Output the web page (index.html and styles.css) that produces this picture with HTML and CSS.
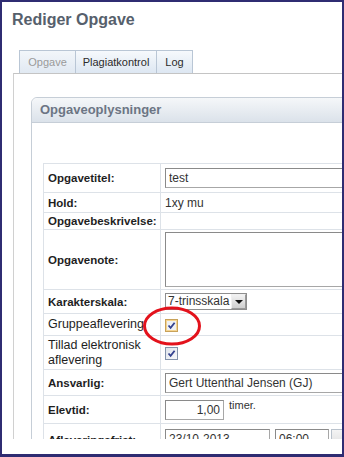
FILE: index.html
```html
<!DOCTYPE HTML>
<html>
<head>
<meta http-equiv="Content-Type" content="text/html; charset=utf-8">
<title>Rediger Opgave</title>
<link rel="stylesheet" href="styles.css">
</head>

<body>
<div class="frame">
<div class="viewport">

<h1>Rediger Opgave</h1>

<div class="tabs">
<span class="tab tabFirst current">Opgave</span>
<span class="tab tabPlag">Plagiatkontrol</span>
<span class="tab tabLog">Log</span>
</div>

<div class="panel">
<div class="box">
<div class="boxHead">Opgaveoplysninger</div>
<div class="boxBody">

<table class="form">
<colgroup><col class="colLabel"><col class="colValue"></colgroup>
<tr class="rowTitle">
	<th>Opgavetitel:</th>
	<td><input type="text" class="txt txtWide" value="test"></td>
</tr>
<tr class="rowHold">
	<th>Hold:</th>
	<td>1xy mu</td>
</tr>
<tr class="rowDesc">
	<th>Opgavebeskrivelse:</th>
	<td></td>
</tr>
<tr class="rowNote">
	<th>Opgavenote:</th>
	<td><textarea class="note"></textarea></td>
</tr>
<tr class="rowScale">
	<th>Karakterskala:</th>
	<td><span class="select"><span class="selectVal">7-trinsskala</span><span class="selectBtn"><span class="arrow"></span></span></span></td>
</tr>
<tr class="rowGroup">
	<th class="plain">Gruppeaflevering</th>
	<td><span class="chk chkHover"><svg width="9" height="9" viewBox="0 0 9 9"><path d="M1.5 4.5 L3.6 6.8 L7.6 1.8" fill="none" stroke="#33418f" stroke-width="1.8"/></svg></span></td>
</tr>
<tr class="rowElec">
	<th class="plain">Tillad elektronisk aflevering</th>
	<td><span class="chk"><svg width="9" height="9" viewBox="0 0 9 9"><path d="M1.5 4.5 L3.6 6.8 L7.6 1.8" fill="none" stroke="#33418f" stroke-width="1.8"/></svg></span></td>
</tr>
<tr class="rowResp">
	<th>Ansvarlig:</th>
	<td><input type="text" class="txt txtWide" value="Gert Uttenthal Jensen (GJ)"></td>
</tr>
<tr class="rowTime">
	<th>Elevtid:</th>
	<td><input type="text" class="txt txtNum" value="1,00"><span class="unit">timer.</span></td>
</tr>
<tr class="rowDeadline">
	<th>Afleveringsfrist:</th>
	<td><input type="text" class="txt txtDate" value="23/10-2013"><input type="text" class="txt txtClock" value="06:00"><span class="pickBtn"></span></td>
</tr>
</table>

</div>
</div>
</div>

<svg class="mark" width="60" height="42" viewBox="0 0 60 42"><ellipse cx="30" cy="21" rx="27.5" ry="18" fill="none" stroke="#e3121c" stroke-width="3"/></svg>

</div>
</div>
</body>
</html>
```

FILE: styles.css
```css
@charset "utf-8";

body{
	margin:0;
	background-color:white;
	font-family:"Liberation Sans", Arial, sans-serif;
	color:#222;
}

.frame{
	width:344px;
	height:457px;
	box-sizing:border-box;
	border:2px solid #2f2c72;
	border-bottom-width:3px;
	padding-bottom:15px;
	background-color:white;
}

.viewport{
	position:relative;
	height:100%;
	overflow:hidden;
}

h1{
	margin:9px 0 0 10px;
	font-size:16px;
	line-height:18px;
	color:#56606c;
}

/* tabs */
.tabs{
	display:flex;
	margin:21px 0 0 17px;
}

.tab{
	height:22px;
	line-height:22px;
	text-align:center;
	font-size:11px;
	color:#2b2b2b;
	border:1px solid #b9c6d5;
	border-bottom:none;
	border-right:none;
	background:linear-gradient(#f6f9fc, #dde7f2);
}

.tabFirst{
	width:55px;
}

.tabPlag{
	width:80px;
}

.tabLog{
	width:35px;
	border-right:1px solid #b9c6d5;
}

.current{
	color:#9a9a9a;
	background:linear-gradient(#f2f6fa, #e1e9f2);
}

.panel{
	margin-left:11px;
	border-top:1px solid #c4c4c4;
	border-left:1px solid #d0d0d0;
	padding:23px 0 0 17px;
	width:600px;
}

/* box */
.box{
	border:1px solid #c6ced7;
	border-top-left-radius:6px;
}

.boxHead{
	height:24px;
	line-height:24px;
	padding-left:8px;
	font-size:13px;
	font-weight:bold;
	color:#6c7584;
	border-bottom:1px solid #c6ced7;
	border-top-left-radius:6px;
	background:linear-gradient(#f5f7f9, #dbe2ea);
}

.boxBody{
	padding:40px 0 0 11px;
	background-color:white;
}

/* form table */
.form{
	border-collapse:collapse;
	table-layout:fixed;
	width:420px;
}

.colLabel{
	width:117px;
}

.form th,
.form td{
	border:1px solid #dde2e8;
	padding:0 4px 0 4px;
	vertical-align:middle;
}

.form th{
	text-align:left;
	font-size:11.5px;
	padding-left:4px;
	color:#1e1e1e;
}

.form td{
	font-size:12px;
	color:#333;
}

.form th.plain{
	font-weight:normal;
	font-size:12.5px;
	line-height:15px;
}

.rowTitle{ height:29px; }
.rowHold{ height:20px; }
.rowDesc{ height:17px; }
.rowNote{ height:60px; }
.rowScale{ height:24px; }
.rowGroup{ height:22px; }
.rowElec{ height:34px; }
.rowResp{ height:26px; }
.rowTime{ height:28px; }
.rowDeadline{ height:40px; }

.rowDeadline th,
.rowDeadline td{
	vertical-align:top;
	padding-top:5px;
}

.rowDeadline th{
	padding-top:10px;
}

/* inputs */
.txt{
	box-sizing:border-box;
	height:20px;
	margin:0;
	padding:0 3px;
	font-family:"Liberation Sans", Arial, sans-serif;
	font-size:12px;
	color:#333;
	border:1px solid #a7a7a7;
	border-top-color:#8a8a8a;
	border-left-color:#8a8a8a;
	background-color:white;
	vertical-align:middle;
}

.txtWide{
	width:260px;
}

.txtNum{
	width:59px;
	text-align:right;
}

.txtDate{
	width:105px;
}

.txtClock{
	width:54px;
	margin-left:5px;
}

.pickBtn{
	display:inline-block;
	width:20px;
	height:20px;
	margin-left:2px;
	vertical-align:middle;
	border:1px solid #b9c2cc;
	box-sizing:border-box;
	background:linear-gradient(#f4f4f4, #dcdcdc);
}

.unit{
	display:inline-block;
	margin-left:5px;
	font-size:11px;
	vertical-align:top;
	line-height:11px;
}

.note{
	display:block;
	box-sizing:border-box;
	width:260px;
	height:55px;
	margin:0;
	border:1px solid #a7a7a7;
	border-top-color:#8a8a8a;
	border-left-color:#8a8a8a;
	resize:none;
}

/* select */
.select{
	display:inline-flex;
	box-sizing:border-box;
	height:17px;
	vertical-align:middle;
	border:1px solid #8e8e8e;
	background-color:white;
}

.selectVal{
	width:63px;
	padding-left:2px;
	font-size:12px;
	line-height:15px;
}

.selectBtn{
	display:flex;
	align-items:center;
	justify-content:center;
	width:15px;
	box-sizing:border-box;
	border:1px solid #9a9a9a;
	border-top-color:#f0f0f0;
	border-left-color:#f0f0f0;
	background:linear-gradient(#f2f2f2, #cfcfcf);
}

.arrow{
	width:0;
	height:0;
	border-left:4px solid transparent;
	border-right:4px solid transparent;
	border-top:4px solid #111;
}

/* checkboxes */
.chk{
	display:inline-flex;
	align-items:center;
	justify-content:center;
	box-sizing:border-box;
	width:13px;
	height:13px;
	vertical-align:middle;
	border:1px solid #8393ab;
	background:linear-gradient(135deg, #dfe4ec, #f7f8fa);
}

.chkHover{
	border-color:#c8a25a;
	box-shadow:inset 0 0 0 1px #f5d592;
	background:#eef0f4;
}

/* red marker */
.mark{
	position:absolute;
	left:140px;
	top:303px;
}
```
